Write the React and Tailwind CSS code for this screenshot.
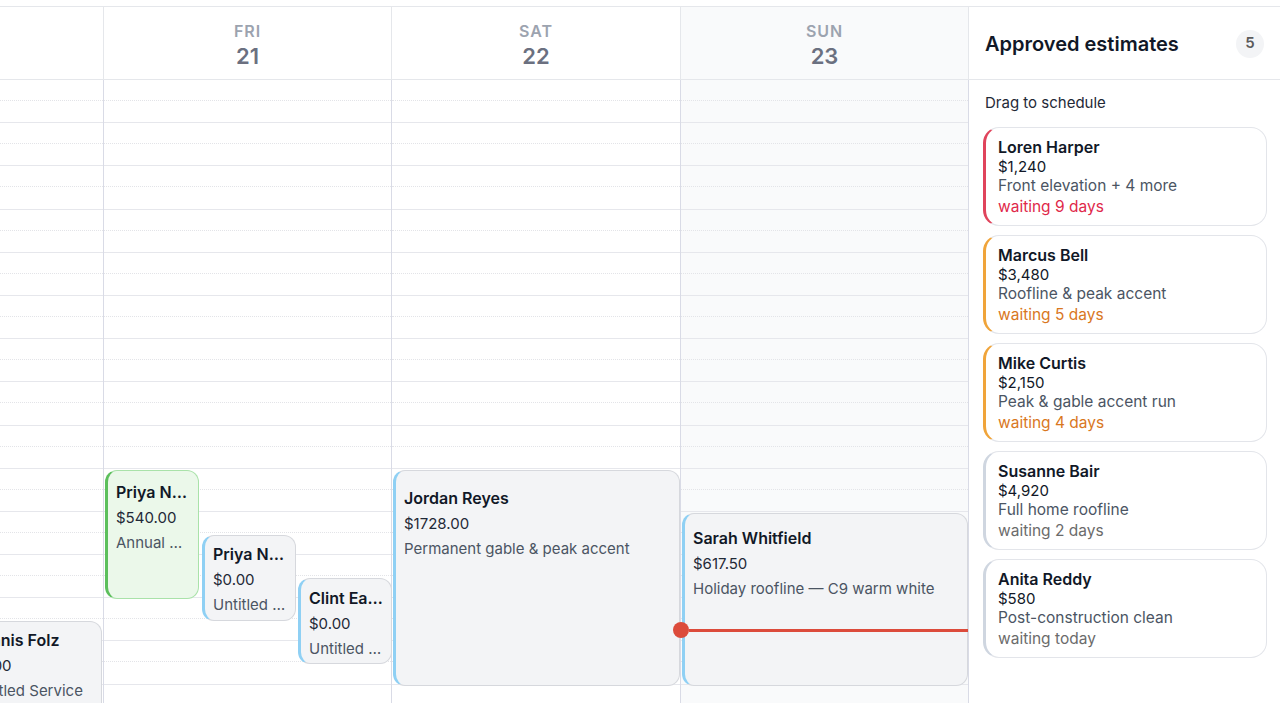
import React from "react";

const HOURS = Array.from({ length: 15 });

const days = [
  { key: "thu", w: "w-[104px]", label: null },
  { key: "fri", w: "w-[288px]", label: "FRI", num: "21" },
  { key: "sat", w: "w-[289px]", label: "SAT", num: "22" },
  { key: "sun", w: "w-[288px]", label: "SUN", num: "23", weekend: true },
];

const estimates = [
  { name: "Loren Harper", price: "$1,240", desc: "Front elevation + 4 more", wait: "waiting 9 days", accent: "border-l-[#e0445c]", waitColor: "text-[#e0284a]" },
  { name: "Marcus Bell", price: "$3,480", desc: "Roofline & peak accent", wait: "waiting 5 days", accent: "border-l-[#f0a43a]", waitColor: "text-[#d9771e]" },
  { name: "Mike Curtis", price: "$2,150", desc: "Peak & gable accent run", wait: "waiting 4 days", accent: "border-l-[#f0a43a]", waitColor: "text-[#d9771e]" },
  { name: "Susanne Bair", price: "$4,920", desc: "Full home roofline", wait: "waiting 2 days", accent: "border-l-[#cfd6e0]", waitColor: "text-[#6b6b6b]" },
  { name: "Anita Reddy", price: "$580", desc: "Post-construction clean", wait: "waiting today", accent: "border-l-[#cfd6e0]", waitColor: "text-[#6b6b6b]" },
];

function HourGrid() {
  return (
    <div>
      {HOURS.map((_, i) => (
        <div key={i} className="h-[43.2px] border-b border-[#e6e7ec] flex flex-col">
          <div className="h-[21px] border-b border-dotted border-[#e3e4e8]" />
        </div>
      ))}
    </div>
  );
}

function EventCard({ className, name, price, desc, green, pt = "pt-[12px]" }) {
  return (
    <div
      className={`absolute overflow-hidden rounded-xl border border-l-[3px] px-2 ${pt} ${
        green
          ? "bg-[#ebf8ea] border-[#a9e2a9] border-l-[#5cbf5c]"
          : "bg-[#f3f4f6] border-[#d6d8dd] border-l-[#8fd0f4]"
      } ${className}`}
    >
      <div className="truncate text-[16px] leading-[22px] font-semibold text-[#111827]">{name}</div>
      <div className="mt-[4px] truncate text-[15px] leading-[21px] text-[#1f2937]">{price}</div>
      <div className="mt-[4px] truncate text-[15px] leading-[21px] text-[#4b5563]">{desc}</div>
    </div>
  );
}

export default function App() {
  return (
    <div className="h-[703px] w-[1280px] overflow-hidden bg-white pt-[6px] font-['Inter',sans-serif]">
      <div className="flex h-full border-t border-[#e5e7eb]">
        {/* calendar */}
        <div className="flex flex-col w-[969px] shrink-0">
          <div className="flex h-[73px] border-b border-[#e5e7eb]">
            {days.map((d) => (
              <div
                key={d.key}
                className={`${d.w} shrink-0 flex flex-col items-center justify-center pt-[3px] border-r border-[#e5e7eb] ${
                  d.weekend ? "bg-[#f9fafb]" : ""
                }`}
              >
                {d.label && (
                  <>
                    <div className="text-[16px] leading-[20px] font-semibold tracking-[0.06em] text-[#9ca3af]">{d.label}</div>
                    <div className="mt-[2px] text-[22px] leading-[26px] font-semibold text-[#6b7080]">{d.num}</div>
                  </>
                )}
              </div>
            ))}
          </div>
          <div className="flex flex-1 overflow-hidden">
            {/* partial thursday */}
            <div className="relative w-[104px] shrink-0 border-r border-[#d9dbe6] overflow-hidden">
              <HourGrid />
              <EventCard
                className="left-[-41px] top-[541px] w-[143px] h-[120px]"
                name="Dennis Folz"
                price="$0.00"
                desc="Untitled Service"
                pt="pt-[7px]"
              />
            </div>
            {/* friday */}
            <div className="relative w-[288px] shrink-0 border-r border-[#d9dbe6]">
              <HourGrid />
              <EventCard className="left-[1px] top-[390px] w-[94px] h-[129px]" name="Priya Nair" price="$540.00" desc="Annual service" green pt="pt-[10px]" />
              <EventCard className="left-[98px] top-[455px] w-[94px] h-[86px]" name="Priya Nair" price="$0.00" desc="Untitled Service" pt="pt-[7px]" />
              <EventCard className="left-[194px] top-[498px] w-[94px] h-[86px]" name="Clint Eastwood" price="$0.00" desc="Untitled Service" pt="pt-[8px]" />
            </div>
            {/* saturday */}
            <div className="relative w-[289px] shrink-0 border-r border-[#d9dbe6]">
              <HourGrid />
              <EventCard className="left-[1px] top-[390px] w-[287px] h-[216px]" name="Jordan Reyes" price="$1728.00" desc="Permanent gable & peak accent" pt="pt-[16px]" />
            </div>
            {/* sunday */}
            <div className="relative w-[288px] shrink-0 border-r border-[#d9dbe6] bg-[#f9fafb]">
              <HourGrid />
              <EventCard className="left-[1px] top-[433px] w-[286px] h-[173px]" name="Sarah Whitfield" price="$617.50" desc="Holiday roofline — C9 warm white" pt="pt-[13px]" />
              <div className="absolute left-[-8px] right-0 top-[542px] flex items-center">
                <div className="h-4 w-4 rounded-full bg-[#dc4b3b] shrink-0" />
                <div className="h-[3px] flex-1 bg-[#dc4b3b]" />
              </div>
            </div>
          </div>
        </div>

        {/* approved estimates panel */}
        <div className="flex flex-col flex-1">
          <div className="flex h-[73px] items-center justify-between border-b border-[#e5e7eb] pl-4 pr-[16px] pt-[1px]">
            <h2 className="text-[20px] font-semibold text-[#111827]">Approved estimates</h2>
            <span className="flex h-[28px] w-[28px] items-center justify-center rounded-full bg-[#f3f4f6] text-[15px] font-semibold text-[#5b5b5b]">
              5
            </span>
          </div>
          <div className="pl-[14px] pr-[13px] pt-[13px]">
            <div className="text-[15px] leading-[20px] text-[#1f2937] pl-[2px]">Drag to schedule</div>
            <div className="mt-[14px] flex flex-col gap-[9px]">
              {estimates.map((e) => (
                <div
                  key={e.name}
                  className={`h-[99px] rounded-2xl border border-[#e3e5ea] border-l-[3px] ${e.accent} bg-white pl-[12px] pt-[8px]`}
                >
                  <div className="text-[16px] leading-[22px] font-semibold text-[#111827]">{e.name}</div>
                  <div className="text-[15px] leading-[18px] text-[#111827]">{e.price}</div>
                  <div className="text-[15.5px] leading-[20px] text-[#4b5563]">{e.desc}</div>
                  <div className={`text-[15.5px] leading-[22px] ${e.waitColor}`}>{e.wait}</div>
                </div>
              ))}
            </div>
          </div>
        </div>
      </div>
    </div>
  );
}
